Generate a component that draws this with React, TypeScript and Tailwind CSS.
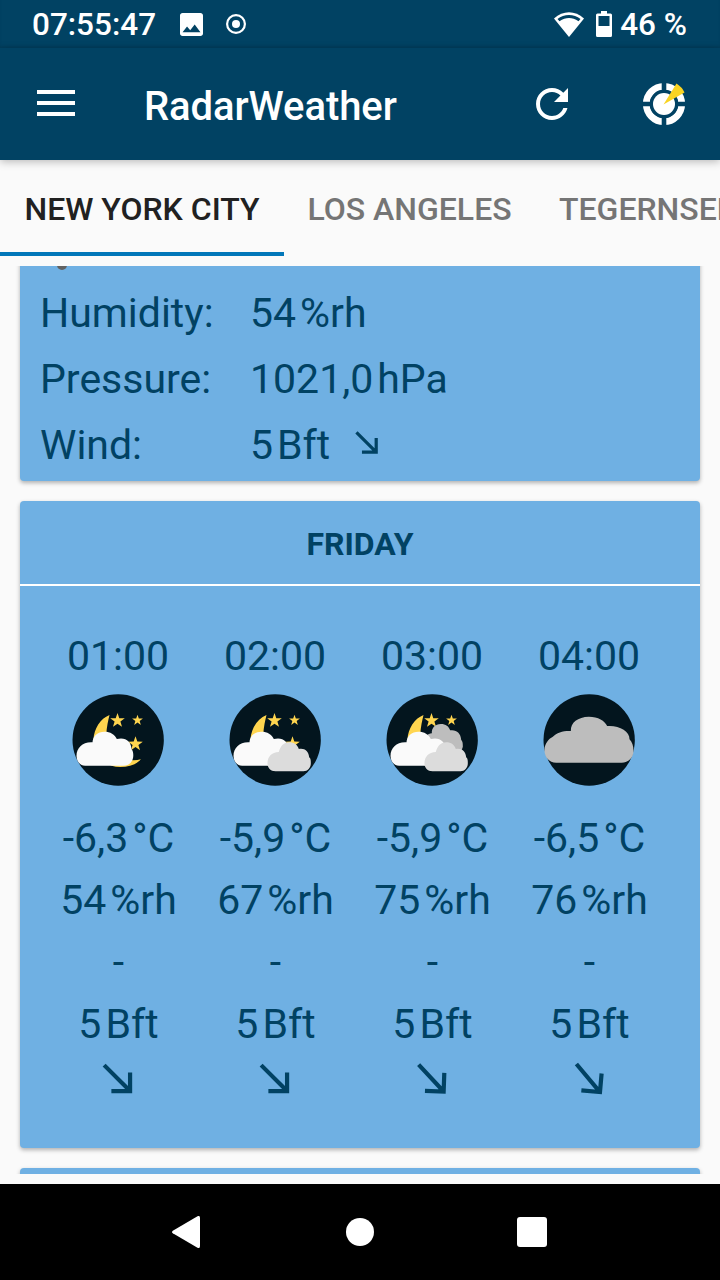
import React from "react";

type Sky = "few" | "scattered" | "broken" | "overcast";

interface Hour {
  time: string;
  sky: Sky;
  temp: string;
  humidity: string;
  rain: string;
  wind: string;
  windTurn: number;
}

const hours: Hour[] = [
  { time: "01:00", sky: "few", temp: "-6,3", humidity: "54", rain: "-", wind: "5", windTurn: 0 },
  { time: "02:00", sky: "scattered", temp: "-5,9", humidity: "67", rain: "-", wind: "5", windTurn: 0 },
  { time: "03:00", sky: "broken", temp: "-5,9", humidity: "75", rain: "-", wind: "5", windTurn: 2 },
  { time: "04:00", sky: "overcast", temp: "-6,5", humidity: "76", rain: "-", wind: "5", windTurn: 5 },
];

const star = (cx: number, cy: number, r: number) =>
  Array.from({ length: 10 }, (_, i) => {
    const a = (Math.PI / 5) * i - Math.PI / 2;
    const d = i % 2 ? r * 0.4 : r;
    return `${(cx + d * Math.cos(a)).toFixed(1)},${(cy + d * Math.sin(a)).toFixed(1)}`;
  }).join(" ");

const smallCloud =
  "M176 274C161 274 152 264 152 250C152 230 164 217 186 216C190 200 200 187 217 187C232 187 242 195 246 207C262 203 276 213 277 232C282 236 282 242 282 250C282 264 272 274 260 274Z";

function SkyIcon({ sky }: { sky: Sky }) {
  return (
    <svg viewBox="36.500 42 276 276" className="size-[92px]">
      <circle cx="175" cy="180" r="137" fill="#03151e" />
      {sky === "overcast" ? (
        <path
          d="M76 248C55 248 41 232 41 210C41 192 53 176 66 170C78 158 97 152 120 153C119 127 141 111 174 110C202 110 222 122 229 138C263 135 297 152 296 178C304 186 308 198 308 212C308 232 293 248 272 248Z"
          fill="#bdbdbd"
        />
      ) : (
        <>
          <path
            d="M149 105C121 116 103 146 101 178C102 226 135 261 181 261C207 261 230 254 243 238C224 243 202 240 185 235C155 222 138 200 139 165C141 140 145 121 149 105Z"
            fill="#ffd54f"
          />
          <polygon points={star(173, 122, 23)} fill="#ffd54f" />
          <polygon points={star(233, 121, 17)} fill="#ffd54f" />
          <polygon points={star(227, 192, 23)} fill="#ffd54f" />
          {sky === "broken" && (
            <path
              d="M165 208C150 204 148 160 174 160C173 143 184 132 201 132C216 132 225 139 229 151C247 148 261 159 262 179C267 184 267 191 267 200C264 214 255 218 240 218Z"
              fill="#bdbdbd"
            />
          )}
          <path
            d="M76 257C60 257 50 243 50 228C50 203 69 185 98 187C99 168 113 155 134 155C151 155 165 163 171 177C196 170 215 184 215 208C220 213 221 221 220 232C218 247 207 257 191 257Z"
            fill="#fafafa"
          />
          {sky !== "few" && <path d={smallCloud} fill="#dcdcdc" />}
        </>
      )}
    </svg>
  );
}

function WindArrow({ size, turn = 0 }: { size: number; turn?: number }) {
  return (
    <svg width={size} height={size} viewBox="-20 -20 40 40" fill="none" stroke="#014263" strokeWidth="4">
      <path
        d="M-13.2 -13.2L11.5 11.5M-6.300 11.500H11.500V-6.300"
        transform={`rotate(${turn})`}
        strokeLinejoin="miter"
      />
    </svg>
  );
}

function Value({ n, unit }: { n: string; unit: string }) {
  return (
    <span className="flex whitespace-pre">
      {n}
      <span className="ml-1">{unit}</span>
    </span>
  );
}

function StatusBar() {
  return (
    <div className="flex h-12 shrink-0 items-center bg-[#014263] pl-8 pr-[33px] text-[31.500px] font-medium text-white shadow-[inset_0_-2px_2px_rgba(0,0,0,0.08)]">
      <span className="mt-[2px] w-[148px] leading-none">07:55:47</span>
      <svg viewBox="3 3 18 18" className="size-[23px] fill-white">
        <path d="M21 19V5c0-1.100-.9-2-2-2H5c-1.100 0-2 .9-2 2v14c0 1.100.9 2 2 2h14c1.100 0 2-.9 2-2zM8.500 13.500l2.500 3.010L14.500 12l4.500 6H5l3.500-4.500z" />
      </svg>
      <svg viewBox="0 0 20 20" className="ml-[23px] size-5">
        <circle cx="10" cy="10" r="8.900" fill="none" stroke="#fff" strokeWidth="2.200" />
        <circle cx="10" cy="10" r="4" fill="#fff" />
      </svg>
      <div className="ml-auto flex items-center">
        <svg viewBox="0 0 30 25" className="mr-3 h-[25px] w-[30px]">
          <path d="M15 25L0 6.500C9 -2 21 -2 30 6.500Z" fill="#fff" />
          <path d="M3.500 7C10 1.500 20 1.500 26.500 7L24.500 9.200C18 5 12 5 5.500 9.200Z" fill="#014263" />
        </svg>
        <svg viewBox="0 0 16 26" className="mr-2 h-[26px] w-4">
          <path d="M5 0H11V2.500H14.500Q16 2.500 16 4V24.500Q16 26 14.500 26H1.500Q0 26 0 24.500V4Q0 2.500 1.500 2.500H5Z" fill="#fff" />
          <path d="M2.500 5H13.500V15H2.500Z" fill="#014263" />
        </svg>
        <span className="mt-[2px] leading-none">46 %</span>
      </div>
    </div>
  );
}

function Toolbar() {
  return (
    <header className="z-10 flex h-28 shrink-0 items-center bg-[#014263] pl-[37px] pr-[34px] text-white shadow-[0_2px_8px_rgba(0,0,0,0.25)]">
      <div className="mb-[2px] flex w-[38px] flex-col gap-[7px]">
        <span className="h-1 bg-white" />
        <span className="h-1 bg-white" />
        <span className="h-1 bg-white" />
      </div>
      <h1 className="ml-[69px] mt-[6px] text-[40px] font-medium leading-none tracking-[-0.08px]">RadarWeather</h1>
      <svg viewBox="4 4 16 16" className="ml-auto size-8 fill-white">
        <path d="M17.650 6.350C16.200 4.900 14.210 4 12 4c-4.420 0-7.990 3.580-7.990 8s3.570 8 7.990 8c3.730 0 6.840-2.550 7.730-6h-2.080c-.82 2.330-3.040 4-5.650 4-3.310 0-6-2.690-6-6s2.690-6 6-6c1.660 0 3.140.69 4.220 1.780L13 11h7V4l-2.350 2.350z" />
      </svg>
      <svg viewBox="-22 -22 44 44" className="ml-[74px] size-11">
        <circle r="17.700" fill="none" stroke="#fff" strokeWidth="6.800" />
        <path d="M0 -22V22M-22 0H22" stroke="#014263" strokeWidth="4.600" />
        <circle r="14.200" fill="#014263" />
        <circle r="11" fill="#fff" />
        <path d="M-.5 .5L12.500 -20.500Q18 -17 20.500 -11.500Z" fill="#f9d423" />
      </svg>
    </header>
  );
}

function Tabs() {
  return (
    <nav className="flex h-24 shrink-0 overflow-hidden text-[32px] font-medium leading-none text-[#757575]">
      <span className="flex w-[284px] shrink-0 items-center justify-center border-b-4 border-[#0277b9] pt-[6px] text-[#212121]">
        NEW YORK CITY
      </span>
      <span className="flex w-[251px] shrink-0 items-center justify-center pt-[2px]">LOS ANGELES</span>
      <span className="flex shrink-0 items-center pl-6 pt-[2px]">TEGERNSEE</span>
    </nav>
  );
}

function CurrentCard() {
  return (
    <section className="-mt-10 rounded-[4px] bg-[#6fb0e3] px-5 pb-[3px] shadow-[0_2px_4px_rgba(0,0,0,0.3)]">
      <div className="flex h-[54px] items-end pl-[17px]">
        <span className="mb-[10px] h-[10px] w-[10px] rounded-full bg-[#616161]" />
      </div>
      <dl className="grid grid-cols-[210px_1fr] auto-rows-[66px] items-center leading-none">
        <dt>Humidity:</dt>
        <dd><Value n="54" unit="%rh" /></dd>
        <dt>Pressure:</dt>
        <dd><Value n="1021,0" unit="hPa" /></dd>
        <dt>Wind:</dt>
        <dd className="flex items-center">
          <Value n="5" unit="Bft" />
          <span className="mb-1 ml-[21px]"><WindArrow size={32} /></span>
        </dd>
      </dl>
    </section>
  );
}

function DayCard() {
  return (
    <section className="mt-5 h-[647px] shrink-0 rounded-[4px] bg-[#6fb0e3] shadow-[0_2px_4px_rgba(0,0,0,0.3)]">
      <h2 className="flex h-[85px] items-center justify-center border-b-2 border-white pt-[2px] text-[32px] font-bold leading-none">
        FRIDAY
      </h2>
      <div className="flex px-5 pt-[39px]">
        {hours.map((h) => (
          <div key={h.time} className="flex w-[157px] shrink-0 flex-col items-center leading-none">
            <span className="mr-[1px] flex h-[62px] items-center">{h.time}</span>
            <span className="mb-[21px] mr-[2px] mt-[7px] block h-[92px]"><SkyIcon sky={h.sky} /></span>
            <span className="flex h-[62px] items-center"><Value n={h.temp} unit="°C" /></span>
            <span className="flex h-[62px] items-center"><Value n={h.humidity} unit="%rh" /></span>
            <span className="flex h-[62px] items-center">{h.rain}</span>
            <span className="flex h-[62px] items-center"><Value n={h.wind} unit="Bft" /></span>
            <span className="mr-[2px] mt-[3px]"><WindArrow size={42} turn={h.windTurn} /></span>
          </div>
        ))}
      </div>
    </section>
  );
}

function NavBar() {
  return (
    <footer className="flex h-24 shrink-0 items-center bg-black pl-[172px]">
      <svg viewBox="0 0 28 32" className="h-8 w-7 fill-white">
        <path d="M25.500 .3Q28 -.8 28 2V30Q28 32.800 25.500 31.700L.8 17.300Q-.8 16 .8 14.700Z" />
      </svg>
      <span className="ml-[146px] size-7 rounded-full bg-white" />
      <span className="ml-[143px] size-[30px] rounded-[3px] bg-white" />
    </footer>
  );
}

export default function App() {
  return (
    <div className="flex h-[1280px] w-[720px] flex-col overflow-hidden bg-[#fafafa] font-[Roboto,sans-serif]">
      <StatusBar />
      <Toolbar />
      <Tabs />
      <main className="mb-[10px] mt-[10px] min-h-0 flex-1 overflow-hidden px-5 text-[41px] text-[#014263]">
        <CurrentCard />
        <DayCard />
        <section className="mt-5 h-40 rounded-[4px] bg-[#6fb0e3] shadow-[0_2px_4px_rgba(0,0,0,0.3)]" />
      </main>
      <NavBar />
    </div>
  );
}
